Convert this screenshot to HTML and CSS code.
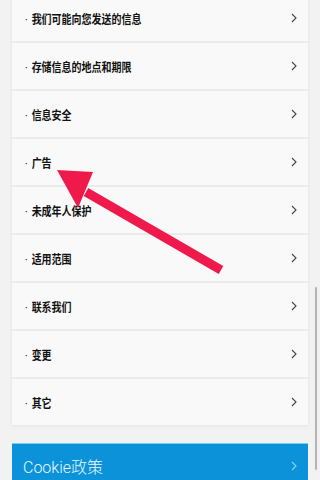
FILE: index.html
```html
<!DOCTYPE html>
<html lang="zh">
<head>
<meta charset="utf-8">
<link rel="stylesheet" href="styles.css">
</head>
<body>
<div class="page">
  <div class="card">
    <div class="row"><span class="label"><span class="dot">·</span>我们可能向您发送的信息</span><svg class="chev" viewBox="0 0 6 10"><path d="M1 1 L5 5 L1 9"/></svg></div>
    <div class="row"><span class="label"><span class="dot">·</span>存储信息的地点和期限</span><svg class="chev" viewBox="0 0 6 10"><path d="M1 1 L5 5 L1 9"/></svg></div>
    <div class="row"><span class="label"><span class="dot">·</span>信息安全</span><svg class="chev" viewBox="0 0 6 10"><path d="M1 1 L5 5 L1 9"/></svg></div>
    <div class="row"><span class="label"><span class="dot">·</span>广告</span><svg class="chev" viewBox="0 0 6 10"><path d="M1 1 L5 5 L1 9"/></svg></div>
    <div class="row"><span class="label"><span class="dot">·</span>未成年人保护</span><svg class="chev" viewBox="0 0 6 10"><path d="M1 1 L5 5 L1 9"/></svg></div>
    <div class="row"><span class="label"><span class="dot">·</span>适用范围</span><svg class="chev" viewBox="0 0 6 10"><path d="M1 1 L5 5 L1 9"/></svg></div>
    <div class="row"><span class="label"><span class="dot">·</span>联系我们</span><svg class="chev" viewBox="0 0 6 10"><path d="M1 1 L5 5 L1 9"/></svg></div>
    <div class="row"><span class="label"><span class="dot">·</span>变更</span><svg class="chev" viewBox="0 0 6 10"><path d="M1 1 L5 5 L1 9"/></svg></div>
    <div class="row"><span class="label"><span class="dot">·</span>其它</span><svg class="chev" viewBox="0 0 6 10"><path d="M1 1 L5 5 L1 9"/></svg></div>
  </div>
  <div class="cookie"><span class="cookie-text">Cookie政策</span><svg class="chev light" viewBox="0 0 6 10"><path d="M1 1 L5 5 L1 9"/></svg></div>
</div>
<svg class="arrow" viewBox="0 0 320 480" width="320" height="480">
  <line x1="86" y1="192" x2="221" y2="270" stroke="#ef1a4b" stroke-width="9"/>
  <polygon points="57,170 93,172 78,208" fill="#ef1a4b"/>
</svg>
<div class="scrollthumb"></div>
</body>
</html>
```

FILE: styles.css
```css
html, body {
  margin: 0;
  padding: 0;
  background: #f2f2f2;
  font-family: "Noto Sans CJK SC", "Noto Sans", sans-serif;
  overflow: hidden;
}
.page {
  padding: 0 12px;
  height: 480px;
  overflow: hidden;
}
.card {
  margin-top: -5px;
  background: #f9f9f9;
  box-shadow: 0 1px 4px rgba(0,0,0,0.06);
}
.row {
  height: 46px;
  border-bottom: 2px solid #ebebeb;
  display: flex;
  align-items: center;
  justify-content: space-between;
  padding: 0 11px 0 13px;
}
.row:last-child {
  border-bottom: none;
}
.label {
  display: inline-block;
  font-size: 10px;
  font-weight: 700;
  color: #111;
  transform: scaleY(1.2);
  transform-origin: left center;
}
.dot {
  font-family: Roboto, sans-serif;
  font-weight: 400;
  margin-right: 4px;
}
.chev {
  width: 6px;
  height: 10px;
  fill: none;
  stroke: #444;
  stroke-width: 1.1;
}
.chev.light {
  stroke: #7fd6ff;
}
.cookie {
  margin-top: 18px;
  height: 44px;
  background: #0b92d8;
  border-top: 1px solid #6dd2f4;
  display: flex;
  align-items: center;
  justify-content: space-between;
  padding: 0 11px 0 11px;
}
.cookie-text {
  font-family: Roboto, "Noto Sans CJK SC", sans-serif;
  font-size: 16px;
  font-weight: 300;
  color: #e6f8ff;
}
.arrow {
  position: absolute;
  top: 0;
  left: 0;
}
.scrollthumb {
  position: absolute;
  left: 315px;
  top: 287px;
  width: 2px;
  height: 183px;
  background: #b3b3b3;
  border-radius: 1px;
}
```
